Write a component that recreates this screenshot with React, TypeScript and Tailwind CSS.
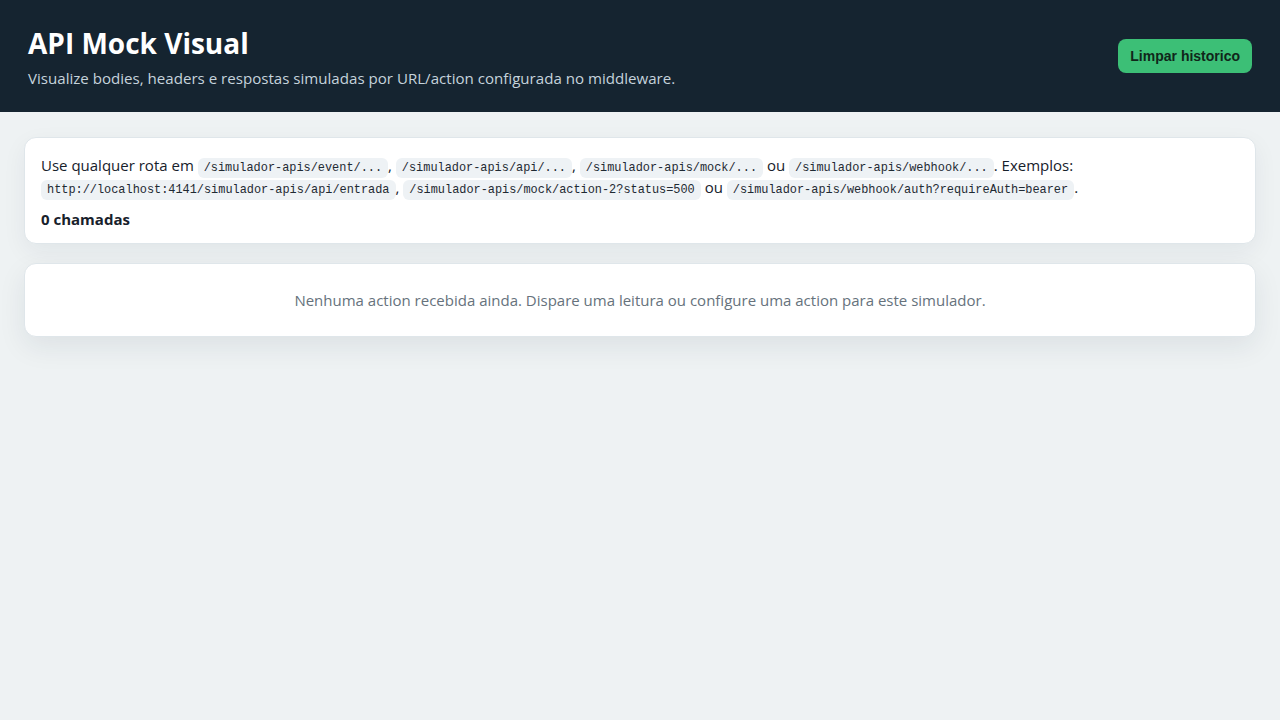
import React from "react";

const sans = "font-['Segoe_UI','Open_Sans','Liberation_Sans',sans-serif]";

function Code({ children }: { children: React.ReactNode }) {
  return (
    <code className="rounded-md bg-[#eef2f5] px-[6px] py-[3px] font-['Liberation_Mono',monospace] text-[11.9px] leading-none text-[#1f2a33]">
      {children}
    </code>
  );
}

export default function App() {
  return (
    <div className={`min-h-screen bg-[#eef2f3] ${sans}`}>
      <header className="flex h-[112px] items-center justify-between bg-[#152430] px-7">
        <div className="mt-[3px] flex flex-col">
          <h1 className="text-[28px] font-bold leading-[36px] text-white">API Mock Visual</h1>
          <p className="mt-[6px] text-[15.1px] text-[#c5d3dc]">
            Visualize bodies, headers e respostas simuladas por URL/action configurada no middleware.
          </p>
        </div>
        <button className="h-[34px] rounded-lg bg-[#3cbf76] px-[12px] font-['Liberation_Sans',sans-serif] text-[14px] font-bold text-[#10261a]">
          Limpar historico
        </button>
      </header>

      <main className="flex flex-col gap-[19px] px-6 pt-[25px]">
        <section className="rounded-xl border border-[#dfe6ea] bg-white px-4 pb-[13px] pt-[16px] shadow-[0_8px_24px_rgba(20,40,60,0.06)]">
          <p className="text-[15px] leading-[22px] text-[#17212b]">
            Use qualquer rota em <Code>/simulador-apis/event/...</Code>, <Code>/simulador-apis/api/...</Code>,{" "}
            <Code>/simulador-apis/mock/...</Code> ou <Code>/simulador-apis/webhook/...</Code>. Exemplos:{" "}
            <Code>http://localhost:4141/simulador-apis/api/entrada</Code>,{" "}
            <Code>/simulador-apis/mock/action-2?status=500</Code> ou{" "}
            <Code>/simulador-apis/webhook/auth?requireAuth=bearer</Code>.
          </p>
          <p className="mt-[10px] text-[15px] font-bold leading-[22px] text-[#17212b]">0 chamadas</p>
        </section>

        <section className="flex h-[74px] items-center justify-center rounded-xl border border-[#dfe6ea] bg-white shadow-[0_10px_28px_rgba(20,40,60,0.08)]">
          <p className="text-[15px] text-[#66727c]">
            Nenhuma action recebida ainda. Dispare uma leitura ou configure uma action para este simulador.
          </p>
        </section>
      </main>
    </div>
  );
}
